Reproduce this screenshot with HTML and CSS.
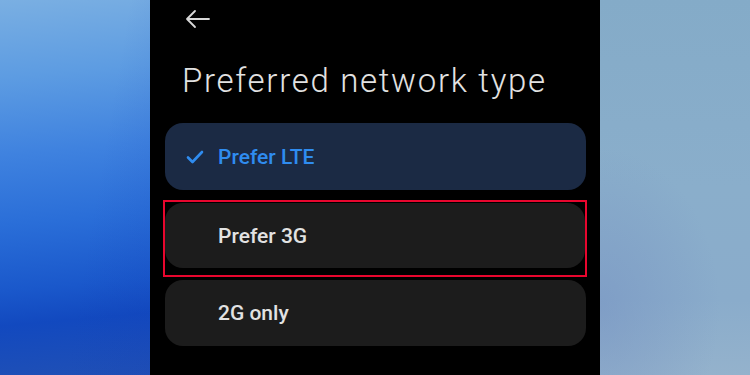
FILE: index.html
```html
<!DOCTYPE html>
<html>
<head>
<meta charset="utf-8">
<link rel="stylesheet" href="styles.css">
</head>
<body>
<div class="stage">
  <div class="side side-left"></div>
  <div class="phone">
    <div class="topbar">
      <svg class="back" width="26" height="20" viewBox="0 0 26 20">
        <path d="M2 10 H24 M10 2 L2 10 L10 18" fill="none" stroke="#d8d8d8" stroke-width="1.8" stroke-linecap="round" stroke-linejoin="round"/>
      </svg>
    </div>
    <h1 class="title">Preferred network type</h1>
    <div class="list">
      <div class="option option-selected">
        <svg class="check" width="18" height="14" viewBox="0 0 18 14">
          <path d="M2 7.5 L6.5 12 L16 2" fill="none" stroke="#2f8cf0" stroke-width="2.6" stroke-linecap="round" stroke-linejoin="round"/>
        </svg>
        <span class="label">Prefer LTE</span>
      </div>
      <div class="highlight">
        <div class="option">
          <span class="label">Prefer 3G</span>
        </div>
      </div>
      <div class="option option-last">
        <span class="label">2G only</span>
      </div>
    </div>
  </div>
  <div class="side side-right"></div>
</div>
</body>
</html>
```

FILE: styles.css
```css
* { box-sizing: border-box; }
html, body {
  margin: 0;
  padding: 0;
  width: 750px;
  height: 375px;
  overflow: hidden;
  font-family: Roboto, "Noto Sans", sans-serif;
}
.stage {
  display: flex;
  width: 750px;
  height: 375px;
}
.side {
  width: 150px;
  height: 375px;
}
.side-left {
  background:
    linear-gradient(100deg, rgba(255,255,255,0) 60%, rgba(20,60,180,0.15) 100%),
    linear-gradient(175deg, #7aafe2 0%, #5d9ce2 20%, #3f82df 40%, #2a6ed8 58%, #1a58cb 75%, #1249bf 84%, #2050b5 100%);
}
.side-right {
  background:
    radial-gradient(ellipse 120px 160px at 0% 82%, rgba(118,146,194,0.55), rgba(118,146,194,0) 100%),
    linear-gradient(180deg, #84abc8 0%, #8aaecb 50%, #8aaccb 80%, #94b2cc 100%);
}
.phone {
  width: 450px;
  height: 375px;
  background: #000;
  padding: 0 14px 0 15px;
  display: flex;
  flex-direction: column;
}
.topbar {
  height: 38px;
  display: flex;
  align-items: center;
  padding-left: 20px;
}
.back { display: block; margin-top: -1px; }
.title {
  margin: 23px 0 0 17px;
  font-size: 33px;
  line-height: 40px;
  font-weight: 300;
  color: #e2e2e2;
  letter-spacing: 1.7px;
  white-space: nowrap;
}
.list {
  margin-top: 22px;
  display: flex;
  flex-direction: column;
}
.option {
  height: 67px;
  border-radius: 18px;
  background: #1c1c1c;
  display: flex;
  align-items: center;
  padding-left: 53px;
  position: relative;
}
.option-selected {
  background: #1b2a44;
}
.check {
  position: absolute;
  left: 21px;
  top: 27px;
}
.label {
  font-size: 21px;
  font-weight: 500;
  color: #e2e2e2;
}
.option-selected .label { color: #2f8cf0; }
.highlight {
  margin: 10px -1px 0 -2px;
  border: 2px solid #e8062e;
  padding: 1px 0 7px 0;
}
.highlight .option { height: 65px; }
.option-last {
  margin-top: 3px;
  height: 66px;
}
```
